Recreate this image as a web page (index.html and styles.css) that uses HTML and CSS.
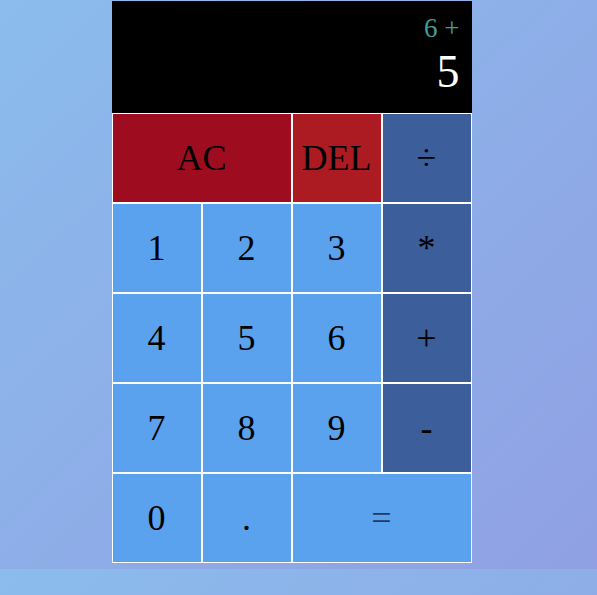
FILE: index.html
```html
<!DOCTYPE html>
<html lang="en">
<head>
<meta charset="utf-8">
<title>Calculator</title>
<link rel="stylesheet" href="styles.css">
</head>
<body>
<div class="calculator">
  <div class="output">
    <div class="previous">6 +</div>
    <div class="current">5</div>
  </div>
  <button class="key key-clear span-two">AC</button>
  <button class="key key-del">DEL</button>
  <button class="key key-op">÷</button>
  <button class="key">1</button>
  <button class="key">2</button>
  <button class="key">3</button>
  <button class="key key-op">*</button>
  <button class="key">4</button>
  <button class="key">5</button>
  <button class="key">6</button>
  <button class="key key-op">+</button>
  <button class="key">7</button>
  <button class="key">8</button>
  <button class="key">9</button>
  <button class="key key-op">-</button>
  <button class="key">0</button>
  <button class="key">.</button>
  <button class="key key-equals span-two">=</button>
</div>
</body>
</html>
```
FILE: styles.css
```css
* {
  box-sizing: border-box;
}

html {
  margin: 0;
}

body {
  margin: 0;
  padding: 1px 14px 6px 0;
  background: linear-gradient(to bottom right, #8bbced, #90a0e3);
  font-family: "Liberation Serif", "Times New Roman", serif;
}

.calculator {
  display: grid;
  justify-content: center;
  grid-template-columns: repeat(4, 90px);
  grid-template-rows: 112px repeat(5, 90px);
}

.output {
  grid-column: 1 / -1;
  background: #000;
  display: flex;
  flex-direction: column;
  align-items: flex-end;
  justify-content: space-between;
  padding: 12px 12px 14px 10px;
  font-family: "Liberation Serif", "Times New Roman", serif;
}

.previous {
  color: #3f9f99;
  font-family: "Liberation Serif", "Times New Roman", serif;
  font-size: 27px;
  line-height: 1.15;
}

.current {
  color: #fff;
  font-family: "Liberation Serif", "Times New Roman", serif;
  font-size: 46px;
  line-height: 1.15;
}

.key {
  font-family: "Liberation Serif", "Times New Roman", serif;
  font-size: 36px;
  color: #000;
  border: 1px solid #fff;
  background: #5ba2ee;
  padding: 0;
  margin: 0;
  cursor: pointer;
}

.span-two {
  grid-column: span 2;
}

.key-clear {
  background: #9e0c1f;
}

.key-del {
  background: #ac1b21;
}

.key-op {
  background: #3c5e9b;
}

.key-equals {
  color: #1f3a66;
}
```
